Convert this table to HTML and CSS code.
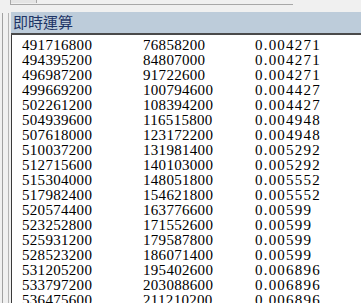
FILE: index.html
```html
<!DOCTYPE html>
<html>
<head>
<meta charset="utf-8">
<link rel="stylesheet" href="styles.css">
</head>
<body>
<div class="app">
  <div class="side"><div class="splitter"></div></div>
  <div class="main">
    <div class="topbar"><div class="tabline"><div class="tab"></div></div></div>
    <div class="header">即時運算</div>
    <div class="list">
      <div class="row"><span>491716800</span><span>76858200</span><span class="ratio">0.004271</span></div>
      <div class="row"><span>494395200</span><span>84807000</span><span class="ratio">0.004271</span></div>
      <div class="row"><span>496987200</span><span>91722600</span><span class="ratio">0.004271</span></div>
      <div class="row"><span>499669200</span><span>100794600</span><span class="ratio">0.004427</span></div>
      <div class="row"><span>502261200</span><span>108394200</span><span class="ratio">0.004427</span></div>
      <div class="row"><span>504939600</span><span>116515800</span><span class="ratio">0.004948</span></div>
      <div class="row"><span>507618000</span><span>123172200</span><span class="ratio">0.004948</span></div>
      <div class="row"><span>510037200</span><span>131981400</span><span class="ratio">0.005292</span></div>
      <div class="row"><span>512715600</span><span>140103000</span><span class="ratio">0.005292</span></div>
      <div class="row"><span>515304000</span><span>148051800</span><span class="ratio">0.005552</span></div>
      <div class="row"><span>517982400</span><span>154621800</span><span class="ratio">0.005552</span></div>
      <div class="row"><span>520574400</span><span>163776600</span><span class="ratio">0.00599</span></div>
      <div class="row"><span>523252800</span><span>171552600</span><span class="ratio">0.00599</span></div>
      <div class="row"><span>525931200</span><span>179587800</span><span class="ratio">0.00599</span></div>
      <div class="row"><span>528523200</span><span>186071400</span><span class="ratio">0.00599</span></div>
      <div class="row"><span>531205200</span><span>195402600</span><span class="ratio">0.006896</span></div>
      <div class="row"><span>533797200</span><span>203088600</span><span class="ratio">0.006896</span></div>
      <div class="row"><span>536475600</span><span>211210200</span><span class="ratio">0.006896</span></div>
    </div>
  </div>
</div>
</body>
</html>
```
FILE: styles.css
```css
html, body {
  margin: 0;
  padding: 0;
}
body {
  width: 361px;
  height: 303px;
  overflow: hidden;
  background: #f0f0f0;
}
.app {
  display: flex;
  height: 303px;
}
.side {
  width: 11px;
  flex: none;
}
.splitter {
  margin-top: 13px;
  margin-left: 2px;
  width: 5px;
  height: 290px;
  border-left: 1px solid #a0a0a0;
  border-right: 1px solid #b4b4b4;
}
.main {
  flex: 1;
  display: flex;
  flex-direction: column;
  min-width: 0;
}
.topbar {
  height: 12px;
  flex: none;
}
.tabline {
  width: 282px;
  height: 4px;
  border-bottom: 1px solid #a8a8a8;
  border-left: 1px solid #a8a8a8;
  margin-left: -1px;
  display: flex;
}
.tab {
  width: 25px;
  height: 3px;
  border-right: 1px solid #a8a8a8;
  background: #e4e4e4;
}
.header {
  height: 21px;
  flex: none;
  background: #bdccda;
  border-bottom: 2px solid #4a4a4a;
  font-family: "Noto Sans CJK TC", "Noto Sans CJK SC", sans-serif;
  font-size: 15px;
  line-height: 20px;
  color: #1e3466;
  padding-left: 2px;
}
.list {
  flex: 1;
  background: #ffffff;
  border-left: 1px solid #3a3a3a;
  padding: 3px 0 0 10px;
  font-family: "Liberation Serif", serif;
  font-size: 15px;
  line-height: 15px;
  color: #000;
  overflow: hidden;
}
.row {
  display: grid;
  grid-template-columns: 121px 112px 1fr;
  height: 15px;
  letter-spacing: 0.3px;
}
.ratio {
  letter-spacing: 1.2px;
}
```
